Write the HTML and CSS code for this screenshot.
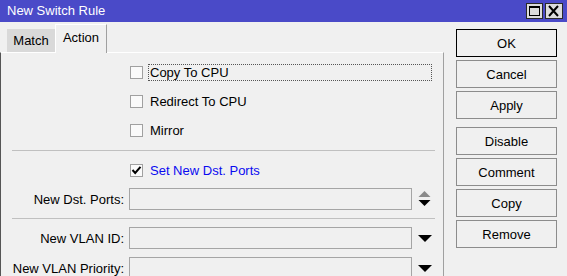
FILE: index.html
```html
<!DOCTYPE html>
<html>
<head>
<meta charset="utf-8">
<link rel="stylesheet" href="styles.css">
</head>
<body>
<div class="window">
  <div class="titlebar">
    <span class="title">New Switch Rule</span>
    <div class="wbtns">
      <span class="wbtn"><svg width="15" height="14" viewBox="0 0 15 14"><rect x="2.5" y="2.5" width="10" height="9" fill="none" stroke="#000" stroke-width="1"/><rect x="2" y="2" width="11" height="2" fill="#000"/></svg></span>
      <span class="wbtn"><svg width="15" height="14" viewBox="0 0 15 14"><path d="M3 2 L12 12 M12 2 L3 12" stroke="#000" stroke-width="2" fill="none"/></svg></span>
    </div>
  </div>
  <div class="body">
    <div class="left">
      <div class="tabs">
        <div class="tab">Match</div>
        <div class="tab active">Action</div>
      </div>
      <div class="pane">
        <div class="cbrow first">
          <span class="cb"></span>
          <span class="cblabel focus">Copy To CPU</span>
        </div>
        <div class="cbrow">
          <span class="cb"></span>
          <span class="cblabel">Redirect To CPU</span>
        </div>
        <div class="cbrow">
          <span class="cb"></span>
          <span class="cblabel">Mirror</span>
        </div>
        <div class="sep"></div>
        <div class="cbrow setrow">
          <span class="cb"><svg width="11" height="11" viewBox="0 0 11 11"><path d="M1.5 5 L4.2 8 L9.5 1.8" stroke="#000" stroke-width="2" fill="none"/></svg></span>
          <span class="cblabel blue">Set New Dst. Ports</span>
        </div>
        <div class="frow dst">
          <span class="flabel">New Dst. Ports:</span>
          <span class="input"></span>
          <span class="arrow"><svg width="13" height="16" viewBox="0 0 13 16"><path d="M0.5 6 L6.5 0 L12.5 6 Z" fill="#8a8a8a"/><path d="M0.5 9 L12.5 9 L6.5 15 Z" fill="#000"/></svg></span>
        </div>
        <div class="sep sep2"></div>
        <div class="frow">
          <span class="flabel">New VLAN ID:</span>
          <span class="input"></span>
          <span class="arrow"><svg width="14" height="7" viewBox="0 0 14 7"><path d="M0 0 L14 0 L7 7 Z" fill="#000"/></svg></span>
        </div>
        <div class="frow prio">
          <span class="flabel">New VLAN Priority:</span>
          <span class="input"></span>
          <span class="arrow"><svg width="14" height="7" viewBox="0 0 14 7"><path d="M0 0 L14 0 L7 7 Z" fill="#000"/></svg></span>
        </div>
      </div>
    </div>
    <div class="right">
      <div class="btn default">OK</div>
      <div class="btn">Cancel</div>
      <div class="btn">Apply</div>
      <div class="btn gap">Disable</div>
      <div class="btn">Comment</div>
      <div class="btn">Copy</div>
      <div class="btn">Remove</div>
    </div>
  </div>
</div>
</body>
</html>
```

FILE: styles.css
```css
html, body {
  margin: 0;
  padding: 0;
  background: #f0f0f0;
}
body {
  font-family: "Liberation Sans", Arial, sans-serif;
  font-size: 13px;
  color: #000;
}
.window {
  width: 567px;
  height: 276px;
  overflow: hidden;
  display: flex;
  flex-direction: column;
}
.titlebar {
  height: 22px;
  flex: none;
  background: #4a4ac8;
  display: flex;
  align-items: center;
  justify-content: space-between;
  padding-left: 7px;
  padding-right: 4px;
  box-sizing: border-box;
}
.title {
  color: #fff;
  font-size: 13px;
  line-height: 22px;
}
.wbtns {
  display: flex;
  gap: 2px;
  align-self: flex-start;
  margin-top: 3px;
}
.wbtn {
  width: 15px;
  height: 14px;
  border: 1px solid #2a2a2a;
  background: #dcdcdc;
  display: flex;
}
.wbtn + .wbtn { width: 16px; }
.body {
  flex: 1;
  display: flex;
  min-height: 0;
}
.left {
  width: 444px;
  flex: none;
  display: flex;
  flex-direction: column;
}
.tabs {
  height: 30px;
  flex: none;
  display: flex;
  align-items: flex-end;
  padding-left: 7px;
  box-sizing: border-box;
}
.tab {
  height: 23px;
  width: 48px;
  background: #d9d9d9;
  display: flex;
  align-items: center;
  justify-content: center;
  box-sizing: border-box;
}
.tab.active {
  height: 29px;
  width: 52px;
  background: #f0f0f0;
  border-top: 1px solid #fff;
  border-left: 1px solid #fff;
  border-right: 1px solid #a0a0a0;
  margin-bottom: -1px;
  position: relative;
  padding-bottom: 3px;
}
.pane {
  flex: 1;
  border-top: 1px solid #fff;
  border-left: 1px solid #555;
  border-right: 1px solid #a0a0a0;
  padding-top: 5px;
  overflow: hidden;
}
.cbrow {
  height: 29px;
  display: flex;
  align-items: center;
  padding-left: 129px;
}
.cb {
  width: 11px;
  height: 11px;
  border: 1px solid #a0a0a0;
  background: #fafafa;
  display: flex;
  flex: none;
}
.cb svg { display: block; }
.cblabel {
  margin-left: 5px;
  border: 1px dotted transparent;
  width: 281px;
  height: 15px;
  line-height: 15px;
  padding-left: 1px;
}
.cblabel.focus {
  border-color: #555;
}
.cblabel.blue {
  color: #0a0af0;
}
.sep {
  height: 1px;
  background: #c0c0c0;
  margin: 5px 8px 5px 11px;
}
.setrow { height: 28px; }
.frow {
  height: 22px;
  display: flex;
  align-items: center;
}
.frow.dst { margin-top: 4px; }
.sep2 { margin-top: 8px; margin-bottom: 8px; }
.frow.prio { margin-top: 8px; }
.flabel {
  width: 123px;
  text-align: right;
  flex: none;
  white-space: nowrap;
}
.input {
  margin-left: 5px;
  width: 281px;
  height: 20px;
  border: 1px solid #a5a5a5;
  background: #f0f0f0;
  flex: none;
}
.arrow {
  margin-left: 6px;
  display: flex;
}
.right {
  flex: 1;
  padding-left: 12px;
  padding-top: 7px;
  display: flex;
  flex-direction: column;
  gap: 3px;
}
.btn {
  width: 99px;
  height: 26px;
  border: 1px solid #8c8c8c;
  background: #f0f0f0;
  display: flex;
  align-items: center;
  justify-content: center;
  flex: none;
}
.btn.default {
  border-color: #000;
}
.btn.gap { margin-top: 5px; }
```
